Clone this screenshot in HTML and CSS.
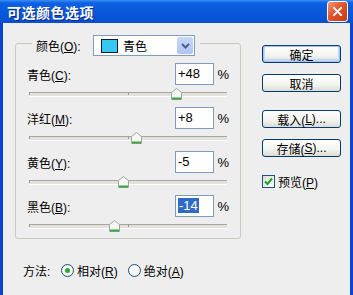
FILE: index.html
```html
<!DOCTYPE html>
<html lang="zh-CN">
<head>
    <meta charset="UTF-8">
    <title>可选颜色选项</title>
    <link rel="stylesheet" href="styles.css">
</head>
<body>
    <div class="window">
        <div class="titlebar">
            <span class="title">可选颜色选项</span>
            <span class="close">
                <svg width="21" height="21" viewBox="0 0 21 21"><path d="M6.5 6.5L14.5 14.5M14.5 6.5L6.5 14.5" stroke="#fff" stroke-width="2.2" stroke-linecap="round"/></svg>
            </span>
        </div>
        <div class="body">
            <div class="main">
                <div class="group">
                    <div class="legend">
                        <span class="legend-label">颜色(<u>O</u>):</span>
                        <div class="select">
                            <span class="swatch"></span>
                            <span class="select-text">青色</span>
                            <span class="drop">
                                <svg width="9" height="6" viewBox="0 0 9 6"><path d="M1 1L4.5 4.5L8 1" fill="none" stroke="#4d6185" stroke-width="2"/></svg>
                            </span>
                        </div>
                    </div>

                    <div class="channel">
                        <div class="channel-row">
                            <span class="channel-label">青色(<u>C</u>):</span>
                            <span class="num">+48</span>
                            <span class="pct">%</span>
                        </div>
                        <div class="slider">
                            <span class="tick tick-start"></span>
                            <span class="tick tick-mid"></span>
                            <span class="thumb" style="left: 142px"><svg width="11" height="12" viewBox="0 0 11 12"><path d="M0.5 4.5L5.5 0.5L10.5 4.5V11.5H0.5Z" fill="#f6f6f2" stroke="#9aa5ad"/><path d="M1 10.5H10" stroke="#3aa83a" stroke-width="2"/></svg></span>
                        </div>
                    </div>

                    <div class="channel">
                        <div class="channel-row">
                            <span class="channel-label">洋红(<u>M</u>):</span>
                            <span class="num">+8</span>
                            <span class="pct">%</span>
                        </div>
                        <div class="slider">
                            <span class="tick tick-start"></span>
                            <span class="tick tick-mid"></span>
                            <span class="thumb" style="left: 102px"><svg width="11" height="12" viewBox="0 0 11 12"><path d="M0.5 4.5L5.5 0.5L10.5 4.5V11.5H0.5Z" fill="#f6f6f2" stroke="#9aa5ad"/><path d="M1 10.5H10" stroke="#3aa83a" stroke-width="2"/></svg></span>
                        </div>
                    </div>

                    <div class="channel">
                        <div class="channel-row">
                            <span class="channel-label">黄色(<u>Y</u>):</span>
                            <span class="num">-5</span>
                            <span class="pct">%</span>
                        </div>
                        <div class="slider">
                            <span class="tick tick-start"></span>
                            <span class="tick tick-mid"></span>
                            <span class="thumb" style="left: 89px"><svg width="11" height="12" viewBox="0 0 11 12"><path d="M0.5 4.5L5.5 0.5L10.5 4.5V11.5H0.5Z" fill="#f6f6f2" stroke="#9aa5ad"/><path d="M1 10.5H10" stroke="#3aa83a" stroke-width="2"/></svg></span>
                        </div>
                    </div>

                    <div class="channel">
                        <div class="channel-row">
                            <span class="channel-label">黑色(<u>B</u>):</span>
                            <span class="num"><span class="selected">-14</span></span>
                            <span class="pct">%</span>
                        </div>
                        <div class="slider">
                            <span class="tick tick-start"></span>
                            <span class="tick tick-mid"></span>
                            <span class="thumb" style="left: 80px"><svg width="11" height="12" viewBox="0 0 11 12"><path d="M0.5 4.5L5.5 0.5L10.5 4.5V11.5H0.5Z" fill="#f6f6f2" stroke="#9aa5ad"/><path d="M1 10.5H10" stroke="#3aa83a" stroke-width="2"/></svg></span>
                        </div>
                    </div>
                </div>

                <div class="method">
                    <span class="method-label">方法:</span>
                    <span class="radio on"></span>
                    <span class="radio-text">相对(<u>R</u>)</span>
                    <span class="radio"></span>
                    <span class="radio-text">绝对(<u>A</u>)</span>
                </div>
            </div>

            <div class="side">
                <div class="btn default">确定</div>
                <div class="btn">取消</div>
                <div class="btn spaced">载入(<u>L</u>)...</div>
                <div class="btn">存储(<u>S</u>)...</div>
                <div class="check-row">
                    <span class="checkbox">
                        <svg width="9" height="9" viewBox="0 0 9 9"><path d="M1 4.5L3.5 7L8 1.5" fill="none" stroke="#21a121" stroke-width="2"/></svg>
                    </span>
                    <span>预览(<u>P</u>)</span>
                </div>
            </div>
        </div>
    </div>
</body>
</html>
```

FILE: styles.css
```css
* {
    box-sizing: border-box;
}
body {
    margin: 0;
    font-family: "Liberation Sans", "Noto Sans CJK SC", sans-serif;
    font-size: 12px;
    color: #000;
    background: #ffffff;
}
u {
    text-decoration: underline;
}
.window {
    width: 353px;
    height: 295px;
    display: flex;
    flex-direction: column;
    background: #0a44d2;
}
.titlebar {
    height: 23px;
    display: flex;
    align-items: center;
    justify-content: space-between;
    padding: 0 5px 0 7px;
    background: linear-gradient(to bottom, #3c8ef3 0, #0d61e2 3px, #0a58da 55%, #094fd0 100%);
}
.title {
    font-family: "Noto Sans CJK SC", sans-serif;
    font-weight: bold;
    font-size: 14px;
    color: #fff;
    text-shadow: 1px 1px 0 #0a2a8a;
    letter-spacing: 0.5px;
}
.close {
    width: 21px;
    height: 21px;
    border: 1px solid #fff;
    border-radius: 3px;
    background: linear-gradient(135deg, #f19a7c 0, #e2542d 45%, #c43b15 100%);
    display: flex;
    align-items: center;
    justify-content: center;
}
.close svg {
    display: block;
}
.body {
    flex: 1;
    display: flex;
    background: #eeeeee;
    margin: 0 3px 0 3px;
    padding: 0 10px 0 12px;
}
.main {
    display: flex;
    flex-direction: column;
}
.group {
    width: 226px;
    height: 196px;
    margin-top: 20px;
    border: 1px solid #c9c9c1;
    border-radius: 3px;
    padding: 0 11px 0 11px;
}
.legend {
    display: flex;
    width: max-content;
    align-items: center;
    margin: -9px 0 0 5px;
    padding: 0 5px 0 4px;
    background: #eeeeee;
    height: 21px;
}
.legend-label {
    width: 57px;
}
.select {
    width: 102px;
    height: 21px;
    border: 1px solid #7f9db9;
    background: #fff;
    display: flex;
    align-items: center;
    padding: 1px 1px 1px 7px;
}
.swatch {
    width: 17px;
    height: 14px;
    border: 1px solid #1a1a1a;
    background: #35c8f4;
}
.select-text {
    flex: 1;
    margin-left: 5px;
    font-family: "Noto Sans CJK SC", sans-serif;
}
.drop {
    width: 16px;
    height: 17px;
    border-radius: 2px;
    background: linear-gradient(to bottom, #c8d6f7, #b0c4f2);
    display: flex;
    align-items: center;
    justify-content: center;
}
.drop svg {
    display: block;
}
.channel {
    height: 44px;
    margin-top: 7px;
}
.channel + .channel {
    margin-top: 0;
}
.channel-row {
    display: flex;
    align-items: center;
    height: 22px;
}
.channel-label {
    flex: 1;
}
.num {
    width: 39px;
    height: 22px;
    border: 1px solid #7f9db9;
    background: #fff;
    font-size: 13px;
    line-height: 20px;
    padding-left: 2px;
}
.selected {
    background: #316ac5;
    color: #fff;
    padding: 0 1px;
}
.pct {
    width: 15px;
    text-align: right;
    font-size: 13px;
}
.slider {
    position: relative;
    width: 198px;
    height: 14px;
    margin: 1px 0 0 2px;
    padding-top: 6px;
}
.slider::before {
    content: "";
    display: block;
    height: 3px;
    border-top: 1px solid #a7a69f;
    border-bottom: 1px solid #ffffff;
    background: #e3e2da;
}
.tick {
    position: absolute;
    top: 6px;
    width: 1px;
    height: 3px;
    background: #9a9a94;
}
.tick-start {
    left: 0;
}
.tick-mid {
    left: 99px;
}
.thumb {
    position: absolute;
    top: 2px;
    width: 11px;
    height: 12px;
}
.thumb svg {
    display: block;
}
.method {
    display: flex;
    align-items: center;
    margin: 23px 0 0 8px;
    height: 16px;
}
.method-label {
    width: 38px;
}
.radio {
    width: 13px;
    height: 13px;
    border: 1px solid #1c5180;
    border-radius: 50%;
    background: radial-gradient(circle at 40% 40%, #ffffff 0, #e9e9e2 100%);
    display: flex;
    align-items: center;
    justify-content: center;
}
.radio.on::after {
    content: "";
    width: 5px;
    height: 5px;
    border-radius: 50%;
    background: #2ea82e;
}
.radio-text {
    margin: 0 10px 0 3px;
}
.side {
    display: flex;
    flex-direction: column;
    margin-left: 21px;
    padding-top: 22px;
}
.btn {
    width: 79px;
    height: 18px;
    border: 1px solid #003c74;
    border-radius: 3px;
    background: linear-gradient(to bottom, #ffffff 0, #f3f3ef 60%, #dcdcd4 100%);
    display: flex;
    align-items: center;
    justify-content: center;
    margin-bottom: 11px;
}
.btn.default {
    box-shadow: inset 0 0 0 1px #a9c4f5, inset 0 -1px 0 2px #c6d8f9;
}
.btn.spaced {
    margin-top: 7px;
}
.check-row {
    display: flex;
    align-items: center;
    margin-top: 5px;
}
.checkbox {
    width: 13px;
    height: 13px;
    border: 1px solid #1c5180;
    background: linear-gradient(135deg, #dcdcd6, #ffffff);
    display: flex;
    align-items: center;
    justify-content: center;
    margin-right: 3px;
}
.checkbox svg {
    display: block;
}
```
